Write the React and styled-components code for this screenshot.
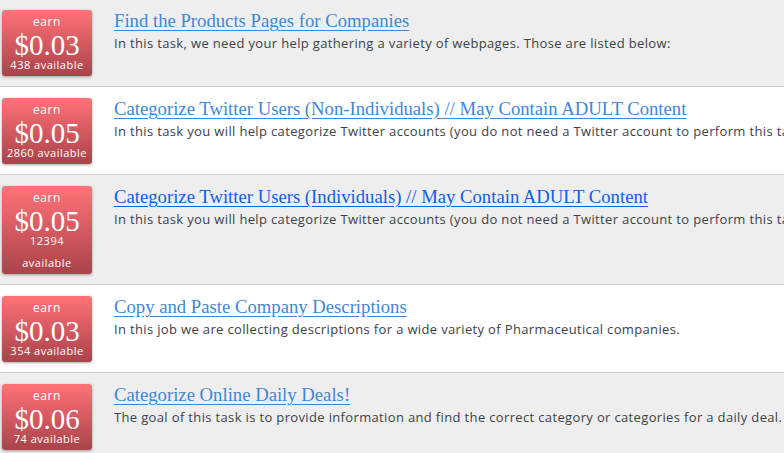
import React from "react";
import styled, { createGlobalStyle } from "styled-components";

const Global = createGlobalStyle`
  html, body { margin: 0; padding: 0; background: #ffffff; overflow: hidden; }
  body { font-family: "Open Sans", "DejaVu Sans", sans-serif; }
`;

const List = styled.div`
  display: flex;
  flex-direction: column;
  margin-top: -1px;
  width: 784px;
  overflow: hidden;
`;

const Row = styled.div`
  display: flex;
  align-items: flex-start;
  gap: 22px;
  padding: 11px 0 10px 2px;
  background: ${(p) => (p.$alt ? "#eeeeee" : "#ffffff")};
  border-bottom: 1px solid #cfcfcf;
`;

const Badge = styled.div`
  flex: 0 0 90px;
  width: 90px;
  box-sizing: border-box;
  display: flex;
  flex-direction: column;
  align-items: center;
  padding: 2px 4px 0;
  border-radius: 3px;
  color: #ffffff;
  background: linear-gradient(to bottom, #ff7379 0%, #d55a60 50%, #a9434a 100%);
  box-shadow: 0 1px 3px rgba(0, 0, 0, 0.35);
  text-align: center;
`;

const Earn = styled.div`
  font-family: "Open Sans", "DejaVu Sans", sans-serif;
  font-size: 12px;
  line-height: 20px;
  letter-spacing: 0.6px;
`;

const Price = styled.div`
  font-family: "Liberation Serif", "Times New Roman", serif;
  font-size: 29px;
  line-height: 22px;
  padding-top: 2px;
  margin-bottom: -2px;
`;

const Avail = styled.div`
  font-family: "Open Sans", "DejaVu Sans", sans-serif;
  font-size: 11px;
  line-height: 22px;
  letter-spacing: 0.5px;
  white-space: ${(p) => (p.$wrap ? "normal" : "nowrap")};
  width: ${(p) => (p.$wrap ? "50px" : "auto")};
`;

const Body = styled.div`
  flex: 1;
  min-width: 0;
  display: flex;
  flex-direction: column;
`;

const Title = styled.a`
  font-family: "Liberation Serif", "Times New Roman", serif;
  font-size: 18.7px;
  line-height: 22px;
  color: ${(p) => (p.$active ? "#0c60e6" : "#3f87d5")};
  text-decoration: underline;
  text-underline-offset: 3px;
  white-space: nowrap;
  align-self: flex-start;
  cursor: pointer;
`;

const Desc = styled.div`
  font-family: "Open Sans", "DejaVu Sans", sans-serif;
  font-size: 13px;
  line-height: 22px;
  letter-spacing: 0.35px;
  color: #3d4148;
  white-space: nowrap;
  overflow: hidden;
`;

const tasks = [
  {
    price: "$0.03",
    avail: "438 available",
    title: "Find the Products Pages for Companies",
    desc: "In this task, we need your help gathering a variety of webpages. Those are listed below:",
  },
  {
    price: "$0.05",
    avail: "2860 available",
    title: "Categorize Twitter Users (Non-Individuals) // May Contain ADULT Content",
    desc: "In this task you will help categorize Twitter accounts (you do not need a Twitter account to perform this task).",
  },
  {
    price: "$0.05",
    avail: "12394 available",
    wrap: true,
    active: true,
    title: "Categorize Twitter Users (Individuals) // May Contain ADULT Content",
    desc: "In this task you will help categorize Twitter accounts (you do not need a Twitter account to perform this task).",
  },
  {
    price: "$0.03",
    avail: "354 available",
    title: "Copy and Paste Company Descriptions",
    desc: "In this job we are collecting descriptions for a wide variety of Pharmaceutical companies.",
  },
  {
    price: "$0.06",
    avail: "74 available",
    title: "Categorize Online Daily Deals!",
    desc: "The goal of this task is to provide information and find the correct category or categories for a daily deal.",
  },
];

export default function App() {
  return (
    <>
      <Global />
      <List>
        {tasks.map((t, i) => (
          <Row key={i} $alt={i % 2 === 0}>
            <Badge>
              <Earn>earn</Earn>
              <Price>{t.price}</Price>
              <Avail $wrap={t.wrap}>{t.avail}</Avail>
            </Badge>
            <Body>
              <Title $active={t.active}>{t.title}</Title>
              <Desc>{t.desc}</Desc>
            </Body>
          </Row>
        ))}
      </List>
    </>
  );
}
